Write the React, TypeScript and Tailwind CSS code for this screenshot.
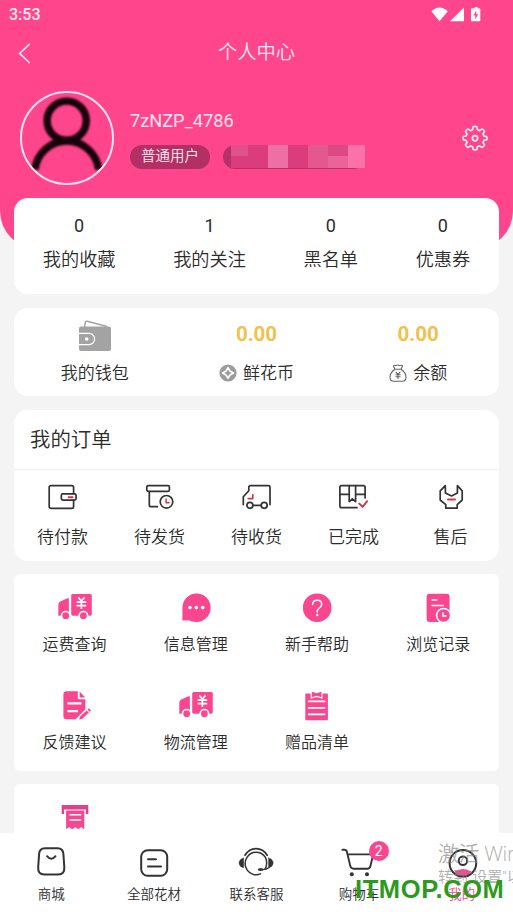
import React from 'react';

interface IconProps {
  className?: string;
}

const PINK = '#fa468f';

/* ---------- status bar ---------- */

const StatusIcons: React.FC<IconProps> = ({ className }) => (
  <svg width="52" height="16" viewBox="0 0 52 16" fill="#fff" className={className}>
    <path d="M0.3 4.2 Q8.5 -3.4 16.8 4.2 L8.5 14.3 Z" />
    <path d="M33 0.6 V14.3 H19 Z" />
    <path d="M42 1.2 H43.6 V0 H46.6 V1.2 H48.4 Q49.3 1.2 49.3 2.2 V13.3 Q49.3 14.3 48.4 14.3 H41 Q40 14.3 40 13.3 V2.2 Q40 1.2 41 1.2 Z" />
    <path d="M45.3 3.5 L42.4 8.6 H44.3 V12.3 L47.2 7.2 H45.3 Z" fill="#ff468c" />
  </svg>
);

const GearIcon = () => (
  <svg width="26" height="26" viewBox="0 0 26 26" fill="none" stroke="#ffeaf3" strokeWidth="1.7" strokeLinejoin="round">
    <path d="M11.1 1.8 Q13 1 14.9 1.8 L15.5 4.7 L17.6 5.6 L20.1 4 Q21.9 4.7 22.6 6.5 L21 9 L21.9 11.1 L24.6 11.6 Q25.3 13.2 24.6 14.9 L21.9 15.4 L21 17.5 L22.5 20 Q21.8 21.8 20 22.5 L17.5 20.9 L15.4 21.8 L14.9 24.5 Q13 25.3 11.2 24.5 L10.6 21.8 L8.5 20.9 L6 22.5 Q4.2 21.8 3.5 20 L5 17.5 L4.1 15.4 L1.4 14.9 Q0.7 13.2 1.4 11.5 L4.1 11 L5 9 L3.5 6.5 Q4.2 4.7 6 4 L8.5 5.6 L10.6 4.7 Z" />
    <circle cx="13" cy="13.2" r="2.6" />
  </svg>
);

/* ---------- wallet row ---------- */

const WalletIcon = () => (
  <svg width="34" height="33" viewBox="0 0 34 33">
    <path d="M6.6 8 L7.2 3.6 Q7.5 1.8 9.3 2.2 L29 7.4" fill="none" stroke="#a3a3a3" strokeWidth="1.5" />
    <rect x="1" y="7.4" width="32" height="24.6" rx="2" fill="#a3a3a3" />
    <path d="M1 14.4 H11 A5.6 5.6 0 0 1 11 25.6 H1" fill="none" stroke="#fff" strokeWidth="1.2" />
    <circle cx="8.7" cy="20" r="1.8" fill="#fff" />
  </svg>
);

const CoinIcon = () => (
  <svg width="18" height="18" viewBox="0 0 18 18">
    <circle cx="9" cy="9" r="8.6" fill="#9c9c9c" />
    <path d="M9 3.6 L11 7 L14.4 9 L11 11 L9 14.4 L7 11 L3.6 9 L7 7 Z" fill="#9c9c9c" stroke="#fff" strokeWidth="1.6" strokeLinejoin="round" />
  </svg>
);

const MoneyBagIcon = () => (
  <svg width="18" height="18" viewBox="0 0 18 18" fill="none" stroke="#666" strokeWidth="1.1" strokeLinejoin="round">
    <path d="M6 5.2 L4.4 1.9 Q5.8 0.7 7.2 1.6 Q9 0.3 10.8 1.6 Q12.2 0.7 13.6 1.9 L12 5.2 Z" />
    <path d="M6 5.2 Q1 8.6 1 13.2 Q1 17.2 5 17.2 H13 Q17 17.2 17 13.2 Q17 8.6 12 5.2" />
    <path d="M6.7 7.8 L9 10.3 L11.3 7.8 M9 10.3 V15 M6.4 10.8 H11.6 M6.4 12.8 H11.6" />
  </svg>
);

/* ---------- order icons ---------- */

const OrderSvg: React.FC<{ children: React.ReactNode }> = ({ children }) => (
  <svg width="32" height="28" viewBox="0 0 32 28" fill="none" stroke="#333" strokeWidth="1.7" strokeLinejoin="round" strokeLinecap="round">
    {children}
  </svg>
);

const PayIcon = () => (
  <OrderSvg>
    <path d="M26.6 10.6 V4.4 Q26.6 2.7 24.9 2.7 H3.9 Q2.2 2.7 2.2 4.4 V23.6 Q2.2 25.3 3.9 25.3 H24.9 Q26.6 25.3 26.6 23.6 V17.4" />
    <rect x="14.3" y="10.8" width="14.8" height="6.4" rx="1.6" />
    <path d="M21.6 14.2 H25.4" stroke="#dd3340" strokeWidth="2" />
  </OrderSvg>
);

const ShipIcon = () => (
  <OrderSvg>
    <rect x="2.8" y="2.7" width="22.6" height="5.6" rx="1.2" />
    <path d="M5.3 8.6 V22 Q5.3 23.7 7 23.7 H13.4" />
    <circle cx="22.5" cy="18.8" r="6.3" />
    <path d="M22.1 16 V19.8 H25" stroke="#dd3340" strokeWidth="1.5" />
  </OrderSvg>
);

const TruckIcon = () => (
  <OrderSvg>
    <path d="M2.3 21.6 V13.7 L7.8 7.7 V4.2 Q7.8 2.7 9.4 2.7 H27.5 Q29 2.7 29 4.3 V21.6 M12 22.4 H19.8" />
    <circle cx="8.9" cy="22.3" r="3" />
    <circle cx="23.2" cy="22.3" r="3" />
    <path d="M7.3 15.6 H11.8 V11.5" stroke="#dd3340" strokeWidth="1.6" />
  </OrderSvg>
);

const DoneIcon = () => (
  <OrderSvg>
    <path d="M27.1 15 V4.4 Q27.1 2.7 25.4 2.7 H3.6 Q1.9 2.7 1.9 4.4 V23 Q1.9 24.7 3.6 24.7 H19" />
    <path d="M1.9 11.4 H11.2 M17.6 11.4 H27.1 M11.2 2.7 V18.6 L14.4 16 L17.6 18.6 V2.7" />
    <path d="M21.3 20.6 L24.6 23.8 L29.2 18.2" stroke="#dd3340" strokeWidth="1.9" />
  </OrderSvg>
);

const AfterSaleIcon = () => (
  <OrderSvg>
    <path d="M10.3 2.7 L5.2 7.9 V17 L10.8 21.6 V25.2 H22.2 V21.6 L27.2 17 V7.9 L22.4 2.7 V10 L16.5 13 L10.4 10 Z" />
    <path d="M13 16.6 H20" stroke="#dd3340" strokeWidth="2" />
  </OrderSvg>
);

/* ---------- service icons ---------- */

const ServiceSvg: React.FC<{ children: React.ReactNode }> = ({ children }) => (
  <svg width="36" height="32" viewBox="0 0 36 32" fill={PINK}>
    {children}
  </svg>
);

const FreightIcon = () => (
  <ServiceSvg>
    <rect x="14.2" y="3" width="20.6" height="21.7" rx="1.6" />
    <path d="M11.9 7.3 V24.7 H1.3 V14 Q1.3 11.6 3.3 10.6 L9.8 7.5 Z" />
    <circle cx="8.7" cy="24.7" r="4.2" stroke="#fff" strokeWidth="1.6" />
    <circle cx="26.4" cy="24.7" r="4.2" stroke="#fff" strokeWidth="1.6" />
    <path d="M21.2 6.4 L24.4 10 L27.6 6.4 M24.4 10 V18 M19.6 11.1 H29.2 M19.6 14.7 H29.2" fill="none" stroke="#fff" strokeWidth="1.7" />
  </ServiceSvg>
);

const ChatIcon = () => (
  <ServiceSvg>
    <path d="M4.4 29.6 V16.8 A14.1 14.3 0 1 1 18.5 31 Q13.6 31 10.5 29.2 Z" />
    <circle cx="11.9" cy="16.6" r="1.8" fill="#fff" />
    <circle cx="18.3" cy="16.6" r="1.8" fill="#fff" />
    <circle cx="24.7" cy="16.6" r="1.8" fill="#fff" />
  </ServiceSvg>
);

const HelpIcon = () => (
  <ServiceSvg>
    <circle cx="18.2" cy="16.7" r="14.3" />
    <path d="M13.6 13.6 Q13.6 9.2 18.2 9.2 Q22.7 9.2 22.7 13.2 Q22.7 15.3 20.3 17 Q18.2 18.5 18.2 21" fill="none" stroke="#fff" strokeWidth="1.5" strokeLinecap="round" />
    <circle cx="18.2" cy="24" r="1.2" fill="#fff" />
  </ServiceSvg>
);

const HistoryIcon = () => (
  <ServiceSvg>
    <rect x="6.6" y="2.7" width="23" height="28.3" rx="3" />
    <path d="M11.4 9.1 H17.4 M11.4 14.6 H24" stroke="#fff" strokeWidth="1.5" />
    <circle cx="23.6" cy="24.5" r="7" stroke="#fff" strokeWidth="1.6" />
    <path d="M22.9 21.4 V25 H26.5" fill="none" stroke="#fff" strokeWidth="1.5" />
  </ServiceSvg>
);

const FeedbackIcon = () => (
  <ServiceSvg>
    <path d="M9.4 2.3 H20.8 V9.3 Q20.8 10.3 21.8 10.3 H28.4 V20.2 L18.6 30.3 H9.4 Q6.4 30.3 6.4 27.3 V5.3 Q6.4 2.3 9.4 2.3 Z" />
    <path d="M22.6 2.6 L28.2 8.4 H22.6 Z" />
    <path d="M10.4 14.3 H24.4 M10.4 22.2 H21" stroke="#fff" strokeWidth="2.2" />
    <path d="M22.1 30.6 L23 27.4 L29.6 21.4 L31.8 23.6 L25.4 29.7 Z" />
    <path d="M30.5 20.6 L31.9 19.4 Q33.2 19.6 33.8 21.4 L32.6 22.8 Z" />
  </ServiceSvg>
);

const GiftIcon = () => (
  <ServiceSvg>
    <rect x="6.3" y="4.4" width="22.6" height="26.9" rx="1" />
    <path d="M12.2 2 L17.6 3.6 L23 2 V9 L17.6 7.4 L12.2 9 Z" stroke="#fff" strokeWidth="1.1" />
    <path d="M9.6 12.4 H25.6 M9.6 18.9 H25.6 M9.6 25.3 H25.6" stroke="#fff" strokeWidth="1.7" strokeLinecap="round" />
  </ServiceSvg>
);

const ReceiptIcon = () => (
  <ServiceSvg>
    <path d="M4.7 4 H31.3 V13 H28.9 V8.6 H7.1 V13 H4.7 Z" fill="#e0408c" />
    <path d="M9.1 9.4 H27.3 V28.2 L24.3 26 L21.3 28.2 L18.2 26 L15.2 28.2 L12.2 26 L9.1 28.2 Z" />
    <path d="M12.4 13.7 H24.2 M12.4 19 H24.2" stroke="#fff" strokeWidth="1.6" />
  </ServiceSvg>
);

/* ---------- tab bar icons ---------- */

const TabSvg: React.FC<{ children: React.ReactNode }> = ({ children }) => (
  <svg width="36" height="36" viewBox="0 0 36 36" fill="none" stroke="#333" strokeWidth="2" strokeLinecap="round" strokeLinejoin="round">
    {children}
  </svg>
);

const ShopIcon = () => (
  <TabSvg>
    <path d="M12 5.3 H24.6 C28.6 5.3 30.2 7.4 30.4 11 L31.3 24 C31.6 29 29.8 31.4 25 31.4 H11.4 C6.7 31.4 4.9 29 5.2 24 L6.1 11 C6.3 7.4 8 5.3 12 5.3 Z" />
    <path d="M14.1 13.2 Q18.3 18.4 22.5 13.2" />
  </TabSvg>
);

const CatalogIcon = () => (
  <TabSvg>
    <rect x="5.2" y="7.2" width="26" height="25.6" rx="6.5" />
    <path d="M12 16.2 H20 M12 23.6 H25" />
  </TabSvg>
);

const ServiceIcon = () => (
  <TabSvg>
    <path d="M7 12.3 Q11 5.6 18 5.6 Q25.2 5.6 29.2 12.3" strokeWidth="1.7" />
    <path d="M15.4 31.4 A11.3 11.3 0 0 1 9 14.4 Q12.2 9.3 18 9.3 Q24 9.3 27.4 14.4 Q30 20 27.3 25.6 M15.4 31.4 Q19.3 32.3 22.4 30.9" strokeWidth="1.5" />
    <path d="M5.6 15.2 V24.8 Q1.4 24 1 20 Q1.4 16 5.6 15.2 Z M30.6 15.2 V24.8 Q34.8 24 35.2 20 Q34.8 16 30.6 15.2 Z" fill="#333" strokeWidth="0.5" />
    <path d="M31 24.6 Q28.8 26.6 24.6 26.6" strokeWidth="1.4" />
    <ellipse cx="22.6" cy="26.5" rx="2.7" ry="1.6" fill="#333" stroke="none" />
  </TabSvg>
);

const CartIcon = () => (
  <TabSvg>
    <path d="M1.4 6.7 H3.4 Q5.4 6.7 5.9 8.7 L9.2 22.6 Q9.9 25.7 12.6 25.7 H26.4 Q28.8 25.7 29.4 23.3 L32.2 11.4 H6.8" strokeWidth="1.9" />
    <circle cx="10.8" cy="31.2" r="2" fill="#333" stroke="none" />
    <circle cx="26" cy="31.2" r="2" fill="#333" stroke="none" />
  </TabSvg>
);

const MineIcon = () => (
  <TabSvg>
    <path d="M10.3 28.6 Q18.9 23.6 27.5 28.6 Q24 33 18.9 33 Q13.8 33 10.3 28.6 Z" fill={PINK} stroke="none" />
    <circle cx="18.9" cy="20.3" r="13.3" />
    <circle cx="18.9" cy="17.7" r="4.2" />
  </TabSvg>
);

/* ---------- data ---------- */

const stats = [
  { value: '0', label: '我的收藏' },
  { value: '1', label: '我的关注' },
  { value: '0', label: '黑名单' },
  { value: '0', label: '优惠券' },
];

const orders = [
  { label: '待付款', Icon: PayIcon },
  { label: '待发货', Icon: ShipIcon },
  { label: '待收货', Icon: TruckIcon },
  { label: '已完成', Icon: DoneIcon },
  { label: '售后', Icon: AfterSaleIcon },
];

const services = [
  { label: '运费查询', Icon: FreightIcon },
  { label: '信息管理', Icon: ChatIcon },
  { label: '新手帮助', Icon: HelpIcon },
  { label: '浏览记录', Icon: HistoryIcon },
  { label: '反馈建议', Icon: FeedbackIcon },
  { label: '物流管理', Icon: FreightIcon },
  { label: '赠品清单', Icon: GiftIcon },
];

const tabs = [
  { label: '商城', Icon: ShopIcon },
  { label: '全部花材', Icon: CatalogIcon },
  { label: '联系客服', Icon: ServiceIcon },
  { label: '购物车', Icon: CartIcon, badge: 2 },
  { label: '我的', Icon: MineIcon, active: true },
];

/* ---------- sections ---------- */

const Avatar = () => (
  <div className="w-[94px] h-[94px] rounded-full border-2 border-[#ffe3f0] overflow-hidden shrink-0">
    <svg width="90" height="90" viewBox="0 0 90 90" fill="none" stroke="#16000a" strokeWidth="7.4" className="blur-[1px]">
      <circle cx="44.7" cy="27.7" r="19.6" />
      <path d="M13 76.5 A32 32 0 0 1 76.6 76.5" />
    </svg>
  </div>
);

const MaskedId = () => (
  <div className="relative w-[142px] h-6">
    <div className="w-[142px] h-6 rounded-full bg-[#b83068]"></div>
    <div className="absolute left-2 top-0 flex h-[23px]">
      <div className="w-[17px] bg-[#da3c7c]">
        <div className="h-[11px] bg-[#e0508a]"></div>
      </div>
      <div className="w-5 bg-[#da3c7c]"></div>
      <div className="w-5 bg-[#ec70a4]"></div>
      <div className="w-5 bg-[#da3c7c]"></div>
      <div className="w-5 bg-[#e2588f]"></div>
      <div className="w-5 bg-[#ea649a]">
        <div className="h-[11px] bg-[#dc4a86]"></div>
      </div>
      <div className="w-[17px] bg-[#fb72aa]"></div>
    </div>
  </div>
);

const Header = () => (
  <header className="h-[249px] shrink-0 bg-[#ff468c] rounded-b-[38px] text-white">
    <div className="h-[29px] pt-px pl-[9px] pr-[30px] flex items-center justify-between">
      <span className="text-[16px] font-medium text-[#ffe9f2]">3:53</span>
      <StatusIcons />
    </div>
    <div className="h-12 px-[18px] flex items-center">
      <svg width="14" height="22" viewBox="0 0 14 22" fill="none" stroke="#ffe3f0" strokeWidth="1.6">
        <path d="M11.8 1.8 L1.6 11.4 L11.8 21" />
      </svg>
      <h1 className="flex-1 text-center text-[19.3px] text-[#ffe9f2] pr-[14px]">个人中心</h1>
    </div>
    <div className="pt-[14px] pl-5 pr-[25px] flex items-start">
      <Avatar />
      <div className="ml-4 pt-4 flex-1">
        <div className="text-[18.2px] leading-7 font-normal text-[#ffe3f0]">7zNZP_4786</div>
        <div className="mt-[10px] flex gap-[13px]">
          <span className="w-20 h-6 rounded-full bg-[#b23064] text-[14.5px] leading-[24px] text-center text-[#ffeaf3]">普通用户</span>
          <MaskedId />
        </div>
      </div>
      <div className="pt-[34px]">
        <GearIcon />
      </div>
    </div>
  </header>
);

export default function App() {
  return (
    <div className="relative w-[513px] h-[912px] overflow-hidden flex flex-col bg-[#f4f4f4] text-[#2b2b2b] font-[350] font-[Roboto,'Noto_Sans_CJK_SC',sans-serif]">
      <Header />

      <main className="flex-1 min-h-0 overflow-hidden -mt-[51px] px-[14px]">
        <section className="h-24 pt-[17px] bg-white rounded-[14px] flex justify-around">
          {stats.map((s) => (
            <div key={s.label} className="flex flex-col items-center">
              <span className="text-[18px] leading-[22px] font-normal">{s.value}</span>
              <span className="text-[18.2px] leading-7 mt-[9px]">{s.label}</span>
            </div>
          ))}
        </section>

        <section className="h-[88px] mt-[14px] bg-white rounded-[14px] grid grid-cols-3 text-[17px] leading-6">
          <div className="flex flex-col items-center pt-[11px]">
            <WalletIcon />
            <span className="mt-[9px]">我的钱包</span>
          </div>
          <div className="flex flex-col items-center pt-[14px]">
            <span className="text-[20.5px] font-bold text-[#efc14f]">0.00</span>
            <span className="mt-[15px] flex items-center gap-[6px]">
              <CoinIcon />鲜花币
            </span>
          </div>
          <div className="flex flex-col items-center pt-[14px]">
            <span className="text-[20.5px] font-bold text-[#efc14f]">0.00</span>
            <span className="mt-[15px] flex items-center gap-[6px]">
              <MoneyBagIcon />余额
            </span>
          </div>
        </section>

        <section className="h-[151px] mt-[14px] bg-white rounded-[14px]">
          <h2 className="h-[60px] px-4 text-[20.4px] leading-[60px] border-b border-[#f2f2f2]">我的订单</h2>
          <div className="grid grid-cols-5 pt-[13px]">
            {orders.map(({ label, Icon }) => (
              <div key={label} className="flex flex-col items-center">
                <Icon />
                <span className="mt-[14px] text-[17px] leading-[25px]">{label}</span>
              </div>
            ))}
          </div>
        </section>

        <section className="h-[197px] mt-[13px] pt-[17px] bg-white rounded-md grid grid-cols-4 content-start">
          {services.map(({ label, Icon }) => (
            <div key={label} className="h-[98px] flex flex-col items-center">
              <Icon />
              <span className="mt-[10px] text-[16px] leading-6">{label}</span>
            </div>
          ))}
        </section>

        <section className="h-40 mt-[13px] pt-[17px] bg-white rounded-md grid grid-cols-4 content-start">
          <div className="flex flex-col items-center">
            <ReceiptIcon />
          </div>
        </section>
      </main>

      <nav className="h-[79px] shrink-0 bg-white grid grid-cols-5 pt-[10px]">
        {tabs.map(({ label, Icon, badge, active }) => (
          <div key={label} className="relative flex flex-col items-center">
            <Icon />
            <span className={`mt-[5px] text-[13.5px] leading-5 ${active ? 'text-[#fa468f]' : ''}`}>{label}</span>
            {badge && (
              <span className="absolute left-[61px] -top-[2px] w-5 h-5 rounded-full bg-[#fa468f] text-white text-[14px] leading-5 font-normal text-center">
                {badge}
              </span>
            )}
          </div>
        ))}
      </nav>

      {/* Desktop activation notice bleeding over the corner */}
      <div className="absolute left-[438px] top-[838px] whitespace-nowrap text-[#8a8a8a]/70 font-['Open_Sans','Noto_Sans_CJK_SC',sans-serif]">
        <div className="text-[21px] leading-[30px] tracking-[-0.4px]">激活 Windows</div>
        <div className="text-[15px] leading-[18px] font-[Roboto,'Noto_Sans_CJK_SC',sans-serif]">转到"设置"以</div>
      </div>
      <div className="absolute left-[355px] top-[875px] whitespace-nowrap text-[25.5px] leading-7 tracking-[0.6px] font-bold text-[#2c9a1c] font-['Liberation_Sans',sans-serif]">
        ITMOP.COM
      </div>
    </div>
  );
}
